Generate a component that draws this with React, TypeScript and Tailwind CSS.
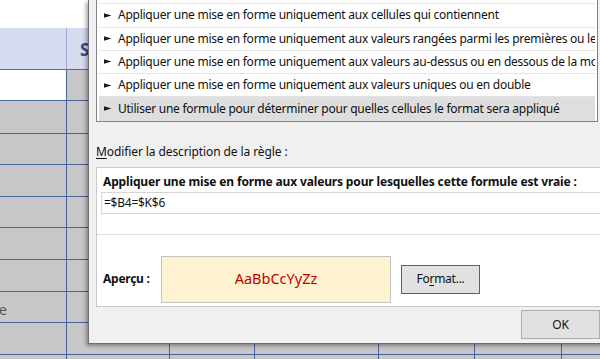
import React from 'react';

const FONT = { fontFamily: '"Noto Sans", "Open Sans", sans-serif' };

const ROWS = [31, 33, 31, 32, 31, 32, 32, 31, 32, 40];
const COLS = [67, 103, 85, 124, 96, 87, 120];

const RULES = [
  "Mettre en forme toutes les cellules d'après leur valeur",
  'Appliquer une mise en forme uniquement aux cellules qui contiennent',
  'Appliquer une mise en forme uniquement aux valeurs rangées parmi les premières ou les dernières valeurs',
  'Appliquer une mise en forme uniquement aux valeurs au-dessus ou en dessous de la moyenne',
  'Appliquer une mise en forme uniquement aux valeurs uniques ou en double',
  'Utiliser une formule pour déterminer pour quelles cellules le format sera appliqué',
];

function Pointer() {
  return (
    <svg width="8" height="5" viewBox="0 0 8 5" className="shrink-0">
      <polygon points="0,0.3 7.5,2.5 0,4.7" fill="#1a1a1a" />
    </svg>
  );
}

function Sheet() {
  return (
    <div className="flex flex-col w-full h-full">
      <div className="h-[28px] bg-white shrink-0" />
      {/* en-tête du tableau */}
      <div className="h-[42px] shrink-0 flex bg-[#d6dcef] border-b border-[#3d8a45]">
        <div className="w-[67px] border-r border-[#aea6d6]" />
        <div className="flex-1 flex items-center pl-[13px] pt-[2px]">
          <span className="text-[17px] font-bold text-[#2f4c86]">S</span>
        </div>
      </div>
      {ROWS.map((h, r) => (
        <div key={r} className="flex shrink-0 border-b border-[#46639a]" style={{ height: h }}>
          {COLS.map((w, c) => (
            <div
              key={c}
              className={`shrink-0 border-r border-[#46639a] flex items-center ${
                r === 0 && c === 0 ? 'bg-white' : 'bg-[#c8c8c8]'
              }`}
              style={{ width: w }}
            >
              {r === 7 && c === 0 && (
                <span className="text-[14px] text-[#555] -ml-[1px] mt-[4px]">e</span>
              )}
            </div>
          ))}
        </div>
      ))}
    </div>
  );
}

function Dialog() {
  return (
    <div className="absolute left-[88px] top-0 w-[540px] h-[344px] bg-[#f0f0f0] border-l border-b border-[#6e6e6e] shadow-[-2px_2px_4px_rgba(0,0,0,0.35)] flex flex-col pl-[7px] text-[12px] tracking-[-0.25px] text-[#111]">
      {/* liste des types de règles */}
      <div className="mt-[-19px] w-[502px] bg-white border-l border-r border-b border-[#828282] px-[2px] flex flex-col">
        {RULES.map((t, i) => (
          <div
            key={i}
            className={`h-[23.25px] flex items-center gap-[6px] pl-[5px] whitespace-nowrap overflow-hidden ${
              i === RULES.length - 1 ? 'bg-[#dedede]' : 'border-b border-[#e4e4e4]'
            }`}
          >
            <Pointer />
            <span>{t}</span>
          </div>
        ))}
      </div>

      <div className="mt-[22px] h-[16px] flex items-center tracking-[-0.1px]">
        <span>
          <span className="underline underline-offset-2">M</span>odifier la description de la règle :
        </span>
      </div>

      {/* description de la règle */}
      <div className="mt-[7px] h-[140px] bg-white border border-[#c9c9c9] flex flex-col">
        <div className="h-[24px] flex items-center pl-[6px] pt-[4px] font-bold tracking-[-0.15px] whitespace-nowrap">
          Appliquer une mise en forme aux valeurs pour lesquelles cette formule est vraie :
        </div>
        <div className="ml-[4px] h-[22px] border border-[#d6d6d6] flex items-center pl-[2px]">
          =$B4=$K$6
        </div>
        <div className="mt-[20px] border-t border-[#dedede]" />
        <div className="flex items-center mt-[21px]">
          <span className="w-[64px] pl-[6px] font-bold">Aperçu :</span>
          <div className="w-[230px] h-[47px] bg-[#fff2cf] border border-[#c4c4c4] flex items-center justify-center text-[14.5px] tracking-normal text-[#c00000]">
            AaBbCcYyZz
          </div>
          <button className="ml-[10px] w-[79px] h-[29px] bg-[#e1e1e1] border border-[#0078d7] flex items-center justify-center">
            Fo<span className="underline underline-offset-2">r</span>mat...
          </button>
        </div>
      </div>

      <div className="flex-1 flex items-center pl-[425px]">
        <button className="w-[79px] h-[29px] bg-[#e1e1e1] border border-[#adadad] flex items-center justify-center">
          OK
        </button>
      </div>
    </div>
  );
}

export default function App() {
  return (
    <div className="relative w-[600px] h-[359px] overflow-hidden bg-white" style={FONT}>
      <Sheet />
      <Dialog />
    </div>
  );
}
